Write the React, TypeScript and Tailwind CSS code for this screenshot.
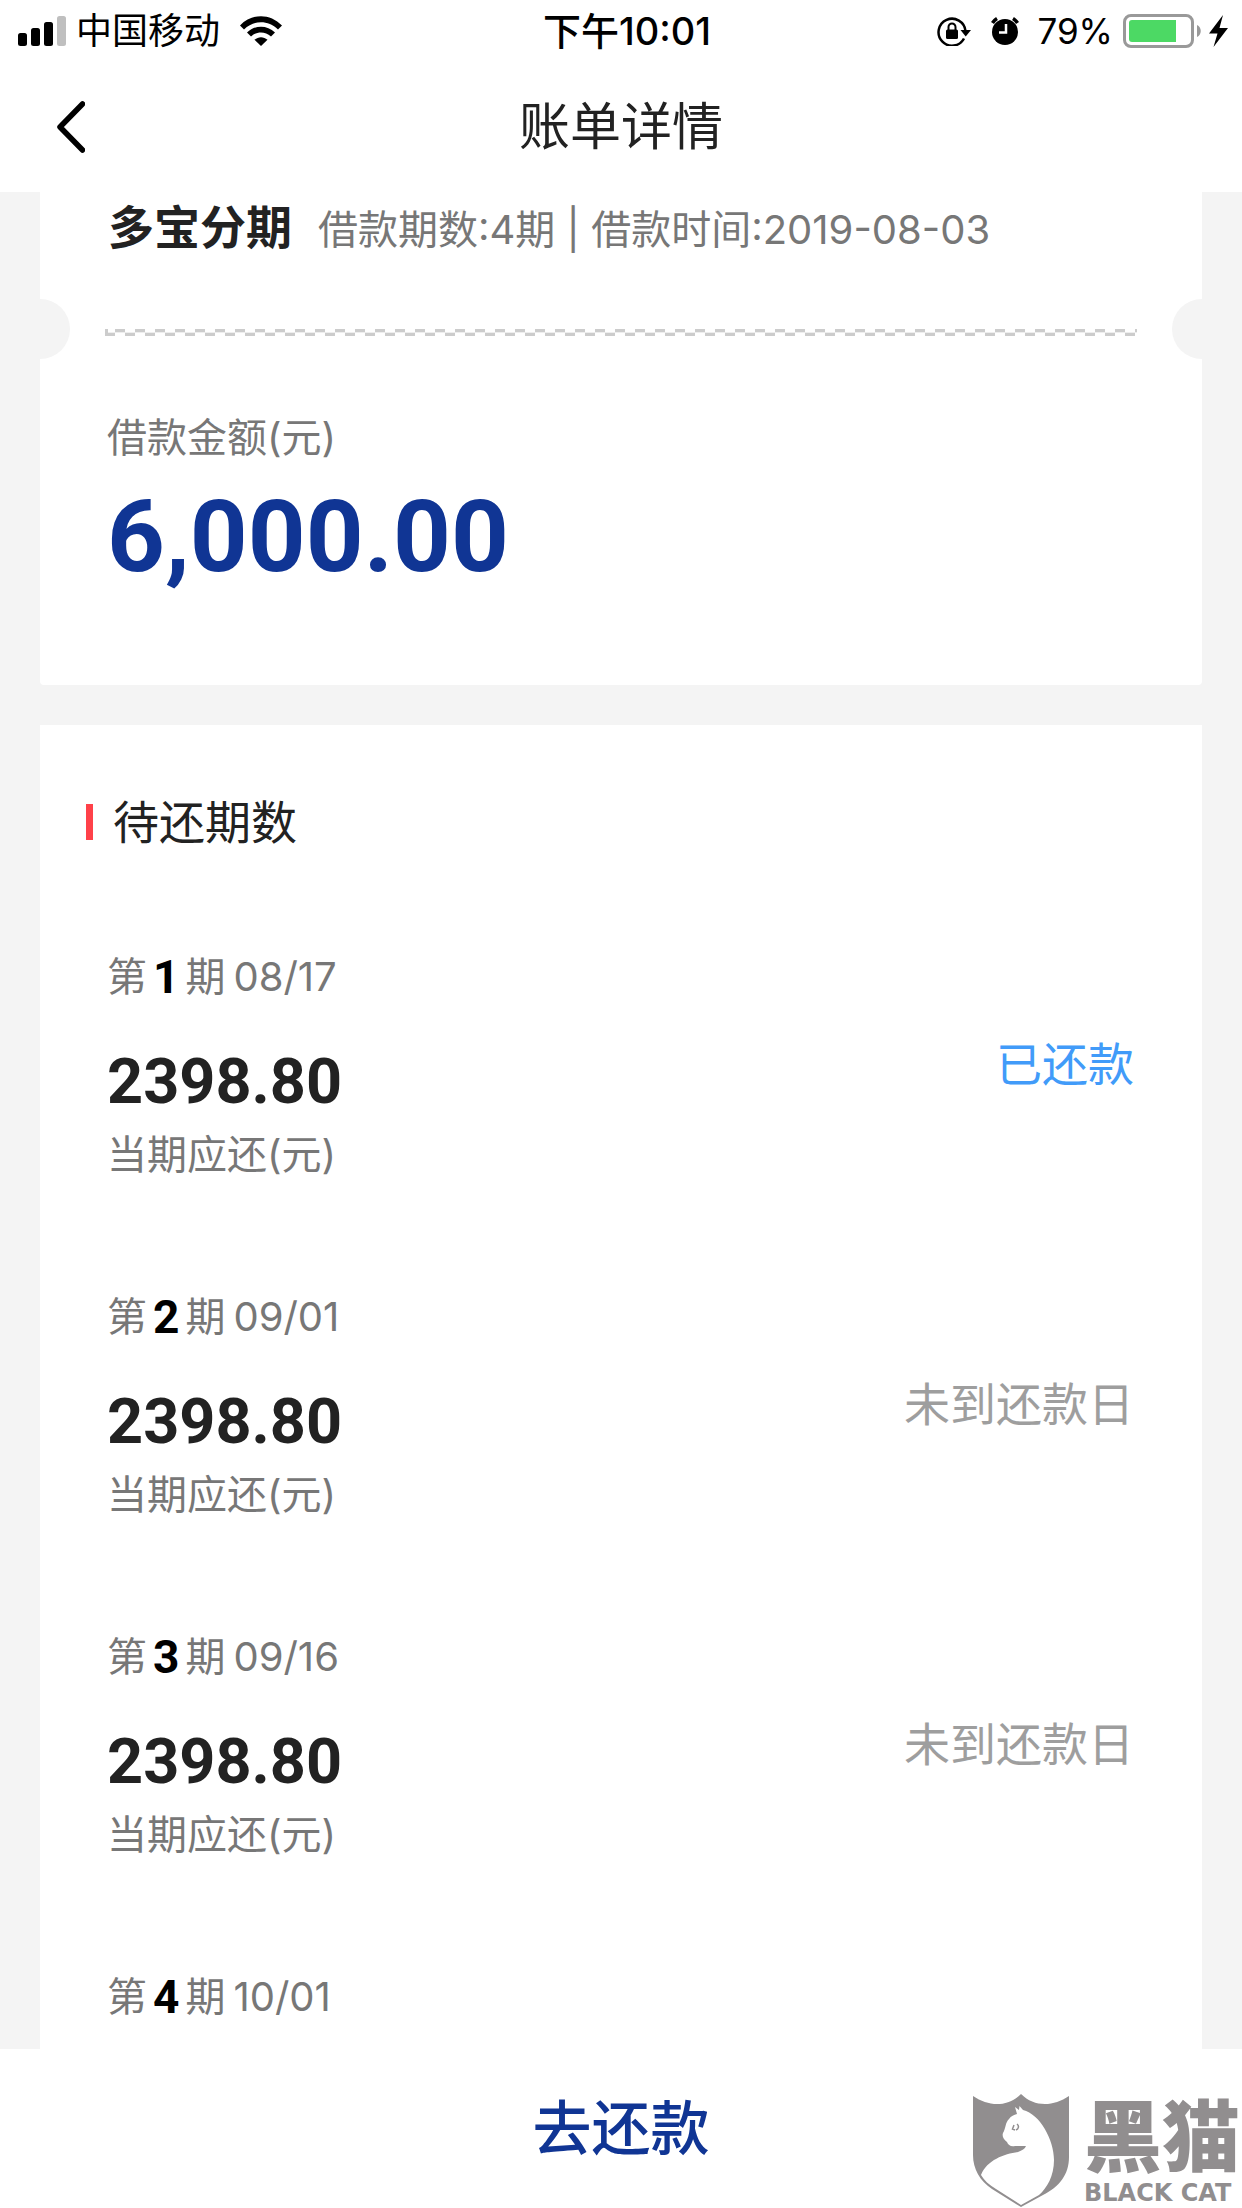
import React from "react";

const installments = [
  { id: 1, date: "08/17", amount: "2398.80", status: "已还款", paid: true },
  { id: 2, date: "09/01", amount: "2398.80", status: "未到还款日", paid: false },
  { id: 3, date: "09/16", amount: "2398.80", status: "未到还款日", paid: false },
  { id: 4, date: "10/01" },
];

function StatusBar() {
  return (
    <div className="grid h-[62px] grid-cols-[1fr_auto_1fr] items-center pr-[14px] pl-[18px] text-[36px] leading-[62px] text-black">
      <div className="flex items-center">
        <svg width="48" height="30" viewBox="0 0 48 30" aria-hidden="true">
          <rect x="0" y="17" width="9" height="13" rx="2.5" />
          <rect x="13" y="12" width="9" height="18" rx="2.5" />
          <rect x="26" y="6" width="9" height="24" rx="2.5" />
          <rect x="39" y="0" width="9" height="30" rx="2.5" fill="#bfbfbf" />
        </svg>
        <span className="ml-[10px]">中国移动</span>
        <svg className="ml-5" width="42" height="30" viewBox="0 0 42 30" aria-hidden="true">
          <path d="M0 9.5C12-3 30-3 42 9.5L38 13.500C28 3.800 14 3.800 4 13.500Z" />
          <path d="M7 16.500C15 8.700 27 8.700 35 16.500L31 20.500C25 15 17 15 11 20.500Z" />
          <path d="M14.500 23.700C18.500 20.300 23.500 20.300 27.500 23.700L21 30Z" />
        </svg>
      </div>
      <span className="ml-2 text-[38px] font-medium">下午10:01</span>
      <div className="flex items-center justify-end">
        <svg width="34" height="30" viewBox="0 0 34 30" fill="none" stroke="#000" strokeWidth="2.500" aria-hidden="true">
          <path d="M27 22.500A13.500 13.500 0 1 1 28.500 15" />
          <path d="M23.500 14H34L28.700 20.500Z" fill="#000" stroke="none" />
          <rect x="9" y="13.500" width="12" height="9.500" rx="1.500" fill="#000" stroke="none" />
          <path d="M11.500 14V11A3.500 3.500 0 0 1 18.500 11V14" strokeWidth="2" />
        </svg>
        <svg className="ml-5" width="28" height="30" viewBox="0 0 28 30" aria-hidden="true">
          <ellipse cx="14" cy="16" rx="13" ry="13" />
          <path d="M1.500 7A13 13 0 0 1 6 2.500" fill="none" stroke="#000" strokeWidth="3.500" />
          <path d="M26.500 7A13 13 0 0 0 22 2.500" fill="none" stroke="#000" strokeWidth="3.500" />
          <path d="M15 8V16.500H8" fill="none" stroke="#fff" strokeWidth="2.500" />
        </svg>
        <span className="ml-[18px] text-[35px]">79%</span>
        <svg className="ml-[10px]" width="78" height="34" viewBox="0 0 78 34" aria-hidden="true">
          <rect x="1.500" y="1.500" width="68" height="31" rx="6.500" fill="none" stroke="#999" strokeWidth="3" />
          <path d="M29 6H53V28H9A3 3 0 0 1 6 25V9A3 3 0 0 1 9 6Z" fill="#4cd964" />
          <path d="M74 11C79 13 79 21 74 23Z" fill="#999" />
        </svg>
        <svg className="ml-2" width="19" height="32" viewBox="0 0 19 32" aria-hidden="true">
          <path d="M14 0L0 18.500H8.500L4.500 32L19 13H10.500Z" />
        </svg>
      </div>
    </div>
  );
}

function Header() {
  return (
    <header className="shrink-0 bg-white">
      <StatusBar />
      <div className="grid h-[130px] grid-cols-[1fr_auto_1fr] items-center px-[55px]">
        <button type="button" aria-label="返回" className="justify-self-start">
          <svg width="30" height="54" viewBox="0 0 30 54" fill="none" stroke="#000" strokeWidth="5.500" strokeLinecap="round" strokeLinejoin="round">
            <path d="M27.500 4L5 27L27.500 50" />
          </svg>
        </button>
        <h1 className="text-[51px] leading-[70px] text-[#222]">账单详情</h1>
      </div>
    </header>
  );
}

function DashedRule() {
  return (
    <svg className="h-[7px] min-w-0 flex-1" aria-hidden="true">
      <defs>
        <pattern id="dash" width="20" height="7" patternUnits="userSpaceOnUse">
          <rect x="0" y="4" width="10" height="3" fill="#ccc" />
          <rect x="10" y="0" width="10" height="3" fill="#ccc" />
          <rect x="0" y="3" width="20" height="1" fill="#eee" />
        </pattern>
      </defs>
      <rect width="100%" height="7" fill="url(#dash)" />
      <rect width="3" height="7" fill="#ccc" />
    </svg>
  );
}

function LoanCard() {
  return (
    <section className="rounded-b bg-white pb-[98px]">
      <div className="flex h-[70px] items-baseline pl-[68px] leading-[70px]">
        <h2 className="text-[46px] font-bold text-[#222]">多宝分期</h2>
        <p className="ml-[26px] text-[40px] text-[#777]">借款期数:4期 | 借款时间:2019-08-03</p>
      </div>
      {/* ticket notches */}
      <div className="mt-[37px] flex items-center">
        <span className="h-[60px] w-[30px] rounded-r-full bg-[#f4f4f4]" />
        <div className="flex flex-1 px-[35px] pt-1.5">
          <DashedRule />
        </div>
        <span className="h-[60px] w-[30px] rounded-l-full bg-[#f4f4f4]" />
      </div>
      <div className="mt-[51px] pl-[67px]">
        <p className="text-[40px] leading-[56px] text-[#777]">借款金额(元)</p>
        <p className="mt-[21px] font-['Roboto'] text-[101px] leading-[100px] font-bold text-[#103594]">6,000.00</p>
      </div>
    </section>
  );
}

function InstallmentList() {
  return (
    <section className="mt-10 bg-white pt-[62px]">
      <div className="flex items-center pl-[46px]">
        <span className="h-9 w-[7px] bg-[#ff4149]" />
        <h2 className="ml-5 text-[46px] leading-[70px] text-[#222]">待还期数</h2>
      </div>
      <ul className="mt-[92px]">
        {installments.map((item) => (
          <li key={item.id} className="flex h-[340px] items-start justify-between pr-[68px] pl-[67px]">
            <div>
              <p className="flex items-center text-[40px] leading-[56px] text-[#777]">
                第<b className="mx-1.5 font-['Roboto'] text-[46px] text-black">{item.id}</b>
                期<span className="ml-2">{item.date}</span>
              </p>
              {item.amount && (
                <>
                  <p className="mt-[42px] font-['Roboto'] text-[63px] leading-[70px] font-bold text-[#222]">
                    {item.amount}
                  </p>
                  <p className="mt-[10px] text-[40px] leading-[56px] text-[#777]">当期应还(元)</p>
                </>
              )}
            </div>
            {item.status && (
              <span
                className={
                  item.paid
                    ? "mt-20 text-[46px] leading-[70px] text-[#419bf9]"
                    : "mt-20 text-[46px] leading-[70px] text-[#9e9e9e]"
                }
              >
                {item.status}
              </span>
            )}
          </li>
        ))}
      </ul>
    </section>
  );
}

function BlackCatLogo() {
  return (
    <div className="flex items-end text-[#918e8f]">
      <svg width="98" height="115" viewBox="0 0 98 115" aria-hidden="true">
        <path
          d="M1 3C17 14 36 14 49 1C62 14 81 14 97 3V64C97 82 87 94 71 102L49 114L20 96C8 88 1 76 1 62Z"
          fill="#918e8f"
        />
        <path
          d="M43 14L47 17L47.500 13L51 17C68 21 82 47 82 67C82 83 75 95 67 102L49 112L24 96C17 92 12 87 9 82C15 67 32 61 46 59C50 57 53 56 54 53H43C39 54 36 52 35 49C31 46 30 43 31 40C34 35 33 30 37 26C39 23 42 22 45 21Z"
          fill="#fff"
        />
        <path d="M42 32L40.500 36L43 37M45 31C47.500 33 46.500 36 44 37" fill="none" stroke="#918e8f" strokeWidth="1.500" />
      </svg>
      <div className="ml-[14px] flex flex-col">
        <span className="text-[78px] leading-[80px] font-black">黑猫</span>
        <span className="font-['DejaVu_Sans'] text-[24px] leading-[30px] font-bold whitespace-nowrap">BLACK CAT</span>
      </div>
    </div>
  );
}

function App() {
  return (
    <div className="flex h-screen flex-col overflow-hidden bg-[#f4f4f4] font-['Inter','Noto_Sans_CJK_SC',sans-serif]">
      <Header />
      <main className="min-h-0 flex-1 overflow-y-auto px-10 [scrollbar-width:none]">
        <LoanCard />
        <InstallmentList />
      </main>
      <footer className="grid h-[159px] shrink-0 grid-cols-[1fr_auto_1fr] items-center bg-white">
        <button type="button" className="col-start-2 text-[59px] leading-[80px] font-medium text-[#103594]">
          去还款
        </button>
        <div className="self-end justify-self-end pr-0.5">
          <BlackCatLogo />
        </div>
      </footer>
    </div>
  );
}

export default App;
